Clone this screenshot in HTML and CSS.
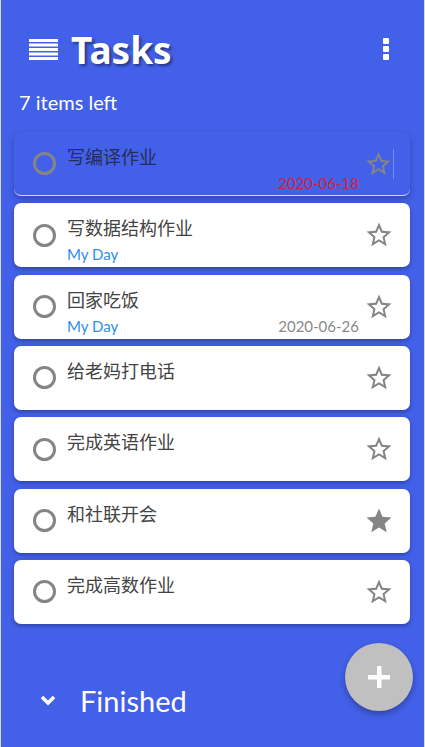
FILE: index.html
```html
<!DOCTYPE html>
<html lang="zh-cn">
<head>
    <meta charset="UTF-8">
    <title>Tasks</title>
    <link rel="stylesheet" href="styles.css">
</head>
<body>
    <div class="app">
        <header class="topbar">
            <svg class="menu" width="29" height="21" viewBox="0 0 29 21">
                <rect x="0" y="0" width="29" height="3" fill="#fff"/>
                <rect x="0" y="4.5" width="29" height="3" fill="#fff"/>
                <rect x="0" y="9" width="29" height="3" fill="#fff"/>
                <rect x="0" y="13.5" width="29" height="3" fill="#fff"/>
                <rect x="0" y="18" width="29" height="3" fill="#fff"/>
            </svg>
            <h1 class="title">Tasks</h1>
            <div class="more">
                <span></span><span></span><span></span>
            </div>
        </header>

        <p class="count">7 items left</p>

        <ul class="todo-list">
            <li class="todo dragging">
                <span class="check"></span>
                <div class="todo-body">
                    <div class="todo-text">写编译作业</div>
                    <div class="todo-meta">
                        <span class="date overdue">2020-06-18</span>
                    </div>
                </div>
                <svg class="star" width="30" height="30" viewBox="0 0 24 24">
                    <path d="M22 9.24l-7.19-.62L12 2 9.19 8.63 2 9.24l5.46 4.73L5.82 21 12 17.27 18.18 21l-1.63-7.03L22 9.24zM12 15.4l-3.76 2.27 1-4.28-3.32-2.88 4.38-.38L12 6.1l1.71 4.04 4.38.38-3.32 2.88 1 4.28L12 15.4z"/>
                </svg>
            </li>
            <li class="todo">
                <span class="check"></span>
                <div class="todo-body">
                    <div class="todo-text">写数据结构作业</div>
                    <div class="todo-meta">
                        <span class="myday">My Day</span>
                    </div>
                </div>
                <svg class="star" width="30" height="30" viewBox="0 0 24 24">
                    <path d="M22 9.24l-7.19-.62L12 2 9.19 8.63 2 9.24l5.46 4.73L5.82 21 12 17.27 18.18 21l-1.63-7.03L22 9.24zM12 15.4l-3.76 2.27 1-4.28-3.32-2.88 4.38-.38L12 6.1l1.71 4.04 4.38.38-3.32 2.88 1 4.28L12 15.4z"/>
                </svg>
            </li>
            <li class="todo">
                <span class="check"></span>
                <div class="todo-body">
                    <div class="todo-text">回家吃饭</div>
                    <div class="todo-meta">
                        <span class="myday">My Day</span>
                        <span class="date">2020-06-26</span>
                    </div>
                </div>
                <svg class="star" width="30" height="30" viewBox="0 0 24 24">
                    <path d="M22 9.24l-7.19-.62L12 2 9.19 8.63 2 9.24l5.46 4.73L5.82 21 12 17.27 18.18 21l-1.63-7.03L22 9.24zM12 15.4l-3.76 2.27 1-4.28-3.32-2.88 4.38-.38L12 6.1l1.71 4.04 4.38.38-3.32 2.88 1 4.28L12 15.4z"/>
                </svg>
            </li>
            <li class="todo">
                <span class="check"></span>
                <div class="todo-body">
                    <div class="todo-text">给老妈打电话</div>
                </div>
                <svg class="star" width="30" height="30" viewBox="0 0 24 24">
                    <path d="M22 9.24l-7.19-.62L12 2 9.19 8.63 2 9.24l5.46 4.73L5.82 21 12 17.27 18.18 21l-1.63-7.03L22 9.24zM12 15.4l-3.76 2.27 1-4.28-3.32-2.88 4.38-.38L12 6.1l1.71 4.04 4.38.38-3.32 2.88 1 4.28L12 15.4z"/>
                </svg>
            </li>
            <li class="todo">
                <span class="check"></span>
                <div class="todo-body">
                    <div class="todo-text">完成英语作业</div>
                </div>
                <svg class="star" width="30" height="30" viewBox="0 0 24 24">
                    <path d="M22 9.24l-7.19-.62L12 2 9.19 8.63 2 9.24l5.46 4.73L5.82 21 12 17.27 18.18 21l-1.63-7.03L22 9.24zM12 15.4l-3.76 2.27 1-4.28-3.32-2.88 4.38-.38L12 6.1l1.71 4.04 4.38.38-3.32 2.88 1 4.28L12 15.4z"/>
                </svg>
            </li>
            <li class="todo">
                <span class="check"></span>
                <div class="todo-body">
                    <div class="todo-text">和社联开会</div>
                </div>
                <svg class="star" width="30" height="30" viewBox="0 0 24 24">
                    <path d="M12 17.27L18.180 21l-1.64-7.03L22 9.24l-7.19-.61L12 2 9.19 8.63 2 9.24l5.46 4.73L5.82 21z"/>
                </svg>
            </li>
            <li class="todo">
                <span class="check"></span>
                <div class="todo-body">
                    <div class="todo-text">完成高数作业</div>
                </div>
                <svg class="star" width="30" height="30" viewBox="0 0 24 24">
                    <path d="M22 9.24l-7.19-.62L12 2 9.19 8.63 2 9.24l5.46 4.73L5.82 21 12 17.27 18.18 21l-1.63-7.03L22 9.24zM12 15.4l-3.76 2.27 1-4.28-3.32-2.88 4.38-.38L12 6.1l1.71 4.04 4.38.38-3.32 2.88 1 4.28L12 15.4z"/>
                </svg>
            </li>
        </ul>

        <div class="finished">
            <svg class="chevron" width="16" height="11" viewBox="0 0 16 11">
                <polyline points="2,2 8,8 14,2" fill="none" stroke="#fff" stroke-width="3.5"/>
            </svg>
            <span>Finished</span>
        </div>

        <button class="fab">
            <svg width="22" height="22" viewBox="0 0 22 22">
                <rect x="9" y="0" width="4.5" height="22" fill="#fff"/>
                <rect x="0" y="9" width="22" height="4.5" fill="#fff"/>
            </svg>
        </button>
    </div>
</body>
</html>
```
FILE: styles.css
```css
* {
    box-sizing: border-box;
}
body {
    margin: 0;
    font-family: Lato, "Noto Sans CJK SC", sans-serif;
}
.app {
    position: relative;
    height: 747px;
    overflow: hidden;
    background-color: #4360e9;
    border-left: 1px solid #d8d8e8;
    border-right: 1px solid #d8d8e8;
}
.topbar {
    display: flex;
    align-items: center;
    height: 50px;
    margin-top: 24px;
    padding-left: 28px;
}
.title {
    margin: 0 0 0 13px;
    font-family: "Noto Sans", sans-serif;
    font-size: 37px;
    font-weight: bold;
    color: #fff;
    text-shadow: 2px 2px 3px rgba(0, 0, 0, 0.45);
}
.more {
    display: flex;
    flex-direction: column;
    gap: 2px;
    margin-left: auto;
    margin-right: 35px;
}
.more span {
    width: 6px;
    height: 6px;
    border-radius: 1px;
    background-color: #fff;
}
.count {
    margin: 16px 0 0 18px;
    line-height: 24px;
    font-size: 20px;
    color: #fff;
}
.todo-list {
    display: flex;
    flex-direction: column;
    gap: 7.33px;
    list-style: none;
    margin: 18px 0 0;
    padding: 0 14px 0 13px;
}
.todo {
    display: flex;
    align-items: center;
    height: 64px;
    padding: 0 16px 0 19px;
    border-radius: 7px;
    background-color: #fff;
    box-shadow: 0 2px 4px rgba(0, 0, 0, 0.3);
}
.check {
    width: 23px;
    height: 23px;
    flex: none;
    border: 3px solid #858585;
    border-radius: 50%;
}
.todo-body {
    flex: 1;
    align-self: stretch;
    margin-left: 11px;
    padding-top: 14px;
}
.todo-text {
    line-height: 22px;
    font-size: 18px;
    color: #444;
}
.todo-meta {
    display: flex;
    margin-top: 5px;
    line-height: 20px;
    font-size: 15px;
}
.myday {
    color: #2d8cf0;
}
.date {
    margin-left: auto;
    color: #8a8a8a;
}
.date.overdue {
    color: #d4213f;
}
.star {
    flex: none;
    margin-left: 5px;
    fill: #858585;
}
.todo.dragging {
    background-color: transparent;
    border-bottom: 1px solid rgba(255, 255, 255, 0.75);
    box-shadow: 0 3px 6px rgba(0, 0, 0, 0.25);
}
.todo.dragging .todo-text {
    color: #262d58;
}
.todo.dragging .star {
    border-right: 1px solid rgba(255, 255, 255, 0.25);
}
.finished {
    display: flex;
    align-items: center;
    height: 40px;
    margin-top: 57px;
    padding-left: 39px;
    color: #fff;
    font-size: 29px;
}
.finished span {
    margin-left: 24px;
}
.fab {
    position: absolute;
    left: 344px;
    top: 643px;
    width: 68px;
    height: 68px;
    display: flex;
    align-items: center;
    justify-content: center;
    padding: 0;
    border: none;
    border-radius: 50%;
    background-color: #c0c0c0;
    box-shadow: 0 3px 6px rgba(0, 0, 0, 0.3);
}
```
